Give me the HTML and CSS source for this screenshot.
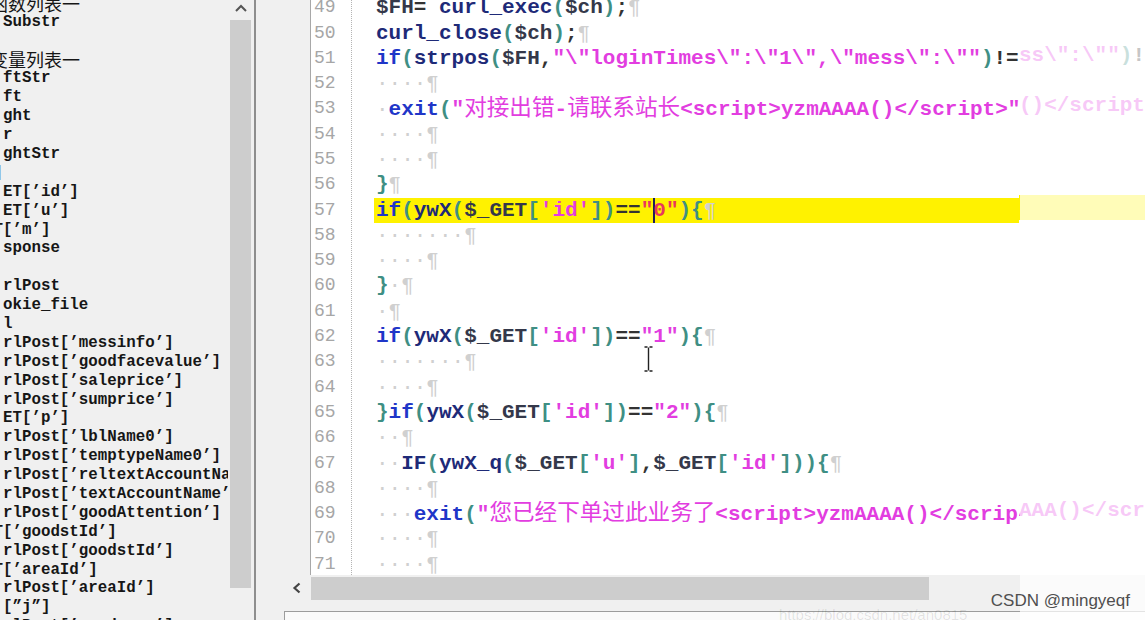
FILE: index.html
```html
<!DOCTYPE html>
<html lang="zh">
<head>
    <meta charset="UTF-8">
    <title>ywX.php - editor</title>
    <link rel="stylesheet" href="styles.css">
</head>
<body>
    <aside class="sidebar">
        <div class="vars">
            <div><span class="hd">函数列表一</span></div>
            <div> Substr</div>
            <div> </div>
            <div><span class="hd">变量列表一</span></div>
            <div> ftStr</div>
            <div> ft</div>
            <div> ght</div>
            <div> r</div>
            <div> ghtStr</div>
            <div>]</div>
            <div> ET[’id’]</div>
            <div> ET[’u’]</div>
            <div>T[’m’]</div>
            <div> sponse</div>
            <div>,</div>
            <div> rlPost</div>
            <div> okie_file</div>
            <div> l</div>
            <div> rlPost[’messinfo’]</div>
            <div> rlPost[’goodfacevalue’]</div>
            <div> rlPost[’saleprice’]</div>
            <div> rlPost[’sumprice’]</div>
            <div> ET[’p’]</div>
            <div> rlPost[’lblName0’]</div>
            <div> rlPost[’temptypeName0’]</div>
            <div> rlPost[’reltextAccountName’]</div>
            <div> rlPost[’textAccountName’]</div>
            <div> rlPost[’goodAttention’]</div>
            <div>T[’goodstId’]</div>
            <div> rlPost[’goodstId’]</div>
            <div>T[’areaId’]</div>
            <div> rlPost[’areaId’]</div>
            <div>.[”j”]</div>
            <div> rlPost[’goodsnum’]</div>
        </div>
    </aside>
    <div class="vscroll">
        <div class="up">
            <svg width="12" height="8" viewBox="0 0 12 8"><path d="M1 7 L6 2 L11 7" fill="none" stroke="#555" stroke-width="2"/></svg>
        </div>
        <div class="vthumb"></div>
    </div>
    <div class="divider"></div>

    <main class="editor">
        <div class="textarea">
            <div class="margin"></div>
            <div class="nums">
                <div class="nlist">
                    <div>49</div><div>50</div><div>51</div><div>52</div><div>53</div><div>54</div>
                    <div>55</div><div>56</div><div>57</div><div>58</div><div>59</div><div>60</div>
                    <div>61</div><div>62</div><div>63</div><div>64</div><div>65</div><div>66</div>
                    <div>67</div><div>68</div><div>69</div><div>70</div><div>71</div>
                </div>
            </div>
            <div class="code">
                <div class="clist">
                    <!-- 49 -->
                    <div class="ln"><div class="txt"><span class="v">$FH</span><span class="o">=</span> <span class="f">curl_exec</span><span class="p">(</span><span class="v">$ch</span><span class="p">)</span><span class="o">;</span><span class="w">¶</span></div><div class="ghost"></div></div>
                    <!-- 50 -->
                    <div class="ln"><div class="txt"><span class="f">curl_close</span><span class="p">(</span><span class="v">$ch</span><span class="p">)</span><span class="o">;</span><span class="w">¶</span></div><div class="ghost"></div></div>
                    <!-- 51 -->
                    <div class="ln"><div class="txt"><span class="k">if</span><span class="p">(</span><span class="f">strpos</span><span class="p">(</span><span class="v">$FH</span><span class="o">,</span><span class="s">"\"loginTimes\":\"1\",\"mess\":\""</span><span class="p">)</span><span class="o">!=</span><span class="s">""</span><span class="p">){</span><span class="w">¶</span></div><div class="ghost"><span class="s">ss\":\""</span><span class="p">)</span><span class="o">!</span></div></div>
                    <!-- 52 -->
                    <div class="ln"><div class="txt"><span class="w">····¶</span></div><div class="ghost"></div></div>
                    <!-- 53 -->
                    <div class="ln"><div class="txt"><span class="w">·</span><span class="k">exit</span><span class="p">(</span><span class="s">"<span class="cn">对接出错</span>-<span class="cn">请联系站长</span>&lt;script&gt;yzmAAAA()&lt;/script&gt;"</span><span class="p">)</span><span class="o">;</span><span class="w">¶</span></div><div class="ghost"><span class="s">()&lt;/script</span></div></div>
                    <!-- 54 -->
                    <div class="ln"><div class="txt"><span class="w">····¶</span></div><div class="ghost"></div></div>
                    <!-- 55 -->
                    <div class="ln"><div class="txt"><span class="w">····¶</span></div><div class="ghost"></div></div>
                    <!-- 56 -->
                    <div class="ln"><div class="txt"><span class="p">}</span><span class="w">¶</span></div><div class="ghost"></div></div>
                    <!-- 57 -->
                    <div class="ln hl"><div class="txt"><span class="k">if</span><span class="p">(</span><span class="f">ywX</span><span class="p">(</span><span class="v">$_GET</span><span class="p">[</span><span class="s">'id'</span><span class="p">])</span><span class="o">==</span><span class="s2">"</span><span class="caret"></span><span class="s2">0"</span><span class="p">){</span><span class="w">¶</span></div><div class="ghost"></div></div>
                    <!-- 58 -->
                    <div class="ln"><div class="txt"><span class="w">·······¶</span></div><div class="ghost"></div></div>
                    <!-- 59 -->
                    <div class="ln"><div class="txt"><span class="w">····¶</span></div><div class="ghost"></div></div>
                    <!-- 60 -->
                    <div class="ln"><div class="txt"><span class="p">}</span><span class="w">·¶</span></div><div class="ghost"></div></div>
                    <!-- 61 -->
                    <div class="ln"><div class="txt"><span class="w">·¶</span></div><div class="ghost"></div></div>
                    <!-- 62 -->
                    <div class="ln"><div class="txt"><span class="k">if</span><span class="p">(</span><span class="f">ywX</span><span class="p">(</span><span class="v">$_GET</span><span class="p">[</span><span class="s">'id'</span><span class="p">])</span><span class="o">==</span><span class="s">"1"</span><span class="p">){</span><span class="w">¶</span></div><div class="ghost"></div></div>
                    <!-- 63 -->
                    <div class="ln"><div class="txt"><span class="w">·······¶</span></div><div class="ghost"></div></div>
                    <!-- 64 -->
                    <div class="ln"><div class="txt"><span class="w">····¶</span></div><div class="ghost"></div></div>
                    <!-- 65 -->
                    <div class="ln"><div class="txt"><span class="p">}</span><span class="k">if</span><span class="p">(</span><span class="f">ywX</span><span class="p">(</span><span class="v">$_GET</span><span class="p">[</span><span class="s">'id'</span><span class="p">])</span><span class="o">==</span><span class="s">"2"</span><span class="p">){</span><span class="w">¶</span></div><div class="ghost"></div></div>
                    <!-- 66 -->
                    <div class="ln"><div class="txt"><span class="w">··¶</span></div><div class="ghost"></div></div>
                    <!-- 67 -->
                    <div class="ln"><div class="txt"><span class="w">··</span><span class="f">IF</span><span class="p">(</span><span class="f">ywX_q</span><span class="p">(</span><span class="v">$_GET</span><span class="p">[</span><span class="s">'u'</span><span class="p">]</span><span class="o">,</span><span class="v">$_GET</span><span class="p">[</span><span class="s">'id'</span><span class="p">])){</span><span class="w">¶</span></div><div class="ghost"></div></div>
                    <!-- 68 -->
                    <div class="ln"><div class="txt"><span class="w">····¶</span></div><div class="ghost"></div></div>
                    <!-- 69 -->
                    <div class="ln"><div class="txt"><span class="w">···</span><span class="k">exit</span><span class="p">(</span><span class="s">"<span class="cn">您已经下单过此业务了</span>&lt;script&gt;yzmAAAA()&lt;/script&gt;"</span><span class="p">)</span><span class="o">;</span><span class="w">¶</span></div><div class="ghost"><span class="s">AAA()&lt;/scr</span></div></div>
                    <!-- 70 -->
                    <div class="ln"><div class="txt"><span class="w">····¶</span></div><div class="ghost"></div></div>
                    <!-- 71 -->
                    <div class="ln"><div class="txt"><span class="w">····¶</span></div><div class="ghost"></div></div>
                </div>
            </div>
        </div>

        <div class="hscroll">
            <div class="left-btn">
                <svg width="10" height="12" viewBox="0 0 10 12"><path d="M7.5 1.5 L2.5 6 L7.5 10.5" fill="none" stroke="#444" stroke-width="2.2"/></svg>
            </div>
            <div class="hthumb"></div>
            <div class="htrack"></div>
        </div>
        <div class="bottom">
            <div class="panel"></div>
        </div>

        <!-- mouse pointer over the text -->
        <svg class="ibeam" width="9" height="26" viewBox="0 0 9 26"><path d="M0.5 1 H3.5 M5.5 1 H8.5 M4.5 1.5 V24.5 M0.5 25 H3.5 M5.5 25 H8.5" fill="none" stroke="#222" stroke-width="1.4"/></svg>

        <div class="fade"></div>
        <div class="url">https://blog.csdn.net/an0815</div>
        <div class="wm">CSDN @mingyeqf</div>
    </main>
</body>
</html>
```

FILE: styles.css
```css
* {
    box-sizing: border-box;
}

body {
    margin: 0;
    width: 1145px;
    height: 620px;
    overflow: hidden;
    display: flex;
    background-color: #f0f0f0;
    font-family: "Liberation Mono", "Noto Sans CJK SC", monospace;
}

/* left list of functions / variables */
.sidebar {
    width: 229px;
    height: 620px;
    overflow: hidden;
    background-color: #f0f0f0;
    color: #161616;
    font-size: 15.8px;
    font-weight: bold;
    line-height: 18.9px;
}

.vars {
    margin: -6.2px 0 0 -6.5px;
}

.vars div {
    height: 18.9px;
    white-space: pre;
}

.hd {
    margin-left: -3.5px;
    font-family: "Noto Sans CJK SC", sans-serif;
    font-weight: normal;
    font-size: 18px;
    line-height: 18px;
}

.vscroll {
    width: 26px;
    background-color: #f0f0f0;
}

.up {
    height: 20px;
    display: flex;
    justify-content: center;
    padding-top: 4px;
}

.up svg {
    display: block;
}

.vthumb {
    width: 21px;
    height: 568px;
    margin-left: 2px;
    background-color: #cdcdcd;
}

.divider {
    width: 2px;
    background-color: #8e8e8e;
}

/* editor */
.editor {
    flex: 1;
    position: relative;
    display: flex;
    flex-direction: column;
    background-color: #f0f0f0;
}

.textarea {
    height: 575px;
    display: flex;
    overflow: hidden;
}

.margin {
    width: 55px;
    background-color: #f0f0f0;
    border-right: 1px solid #a8a8a8;
}

.nums {
    width: 41px;
    padding-left: 3px;
    background-color: #fff;
    border-right: 1px dotted #b4b4b4;
    color: #a6a6a6;
    font-size: 18px;
    line-height: 25.3px;
}

.nlist {
    margin-top: -4.8px;
}

.nlist div {
    height: 25.3px;
}

.code {
    flex: 1;
    padding-left: 22px;
    background-color: #fff;
    font-size: 21px;
    font-weight: bold;
    line-height: 25.3px;
}

.clist {
    margin-top: -4.8px;
}

.ln {
    display: flex;
    height: 25.3px;
}

.txt {
    width: 645px;
    height: 25.3px;
    padding-left: 2px;
    overflow: hidden;
    white-space: pre;
    color: #333;
}

.ghost {
    flex: 1;
    height: 25.3px;
    margin-top: -3px;
    overflow: hidden;
    white-space: pre;
}

.hl .txt,
.hl .ghost {
    background-color: #fff200;
}

.k { color: #1f36c8; }
.f { color: #1e2a78; }
.v { color: #34384a; }
.p { color: #3f8f84; }
.o { color: #333; }
.s { color: #e23de0; }
.s2 { color: #e8365e; }
.w {
    color: #d0d0d0;
    font-weight: normal;
}

.cn {
    font-family: "Noto Sans CJK SC", sans-serif;
    font-size: 22.6px;
    font-weight: normal;
    line-height: 20px;
}

.caret {
    display: inline-block;
    width: 2px;
    height: 25.3px;
    margin-right: -2px;
    vertical-align: top;
    background-color: #1e1e5a;
}

/* horizontal scrollbar */
.hscroll {
    height: 25px;
    margin-left: 28px;
    display: flex;
    background-color: #f0f0f0;
}

.left-btn {
    width: 27px;
    display: flex;
    align-items: center;
    justify-content: center;
}

.hthumb {
    width: 618px;
    margin-top: 2px;
    background-color: #cdcdcd;
}

.htrack {
    flex: 1;
}

.bottom {
    flex: 1;
    padding: 11px 0 0 28px;
}

.panel {
    height: 100%;
    border-top: 1px solid #9c9c9c;
    border-left: 1px solid #9c9c9c;
    background-color: #fafafa;
}

.ibeam {
    position: absolute;
    left: 388px;
    top: 346px;
}

/* faded strip on the right side of the frame */
.fade {
    position: absolute;
    top: 0;
    right: 0;
    bottom: 0;
    width: 125px;
    background-color: rgba(255, 255, 255, 0.72);
}

.url {
    position: absolute;
    left: 523px;
    bottom: -3px;
    font-family: "Liberation Sans", sans-serif;
    font-size: 15px;
    color: rgba(0, 0, 0, 0.1);
}

.wm {
    position: absolute;
    right: 15px;
    bottom: 9px;
    z-index: 2;
    font-family: "Liberation Sans", "Noto Sans", sans-serif;
    font-size: 17px;
    color: #4f4f4f;
}
```
